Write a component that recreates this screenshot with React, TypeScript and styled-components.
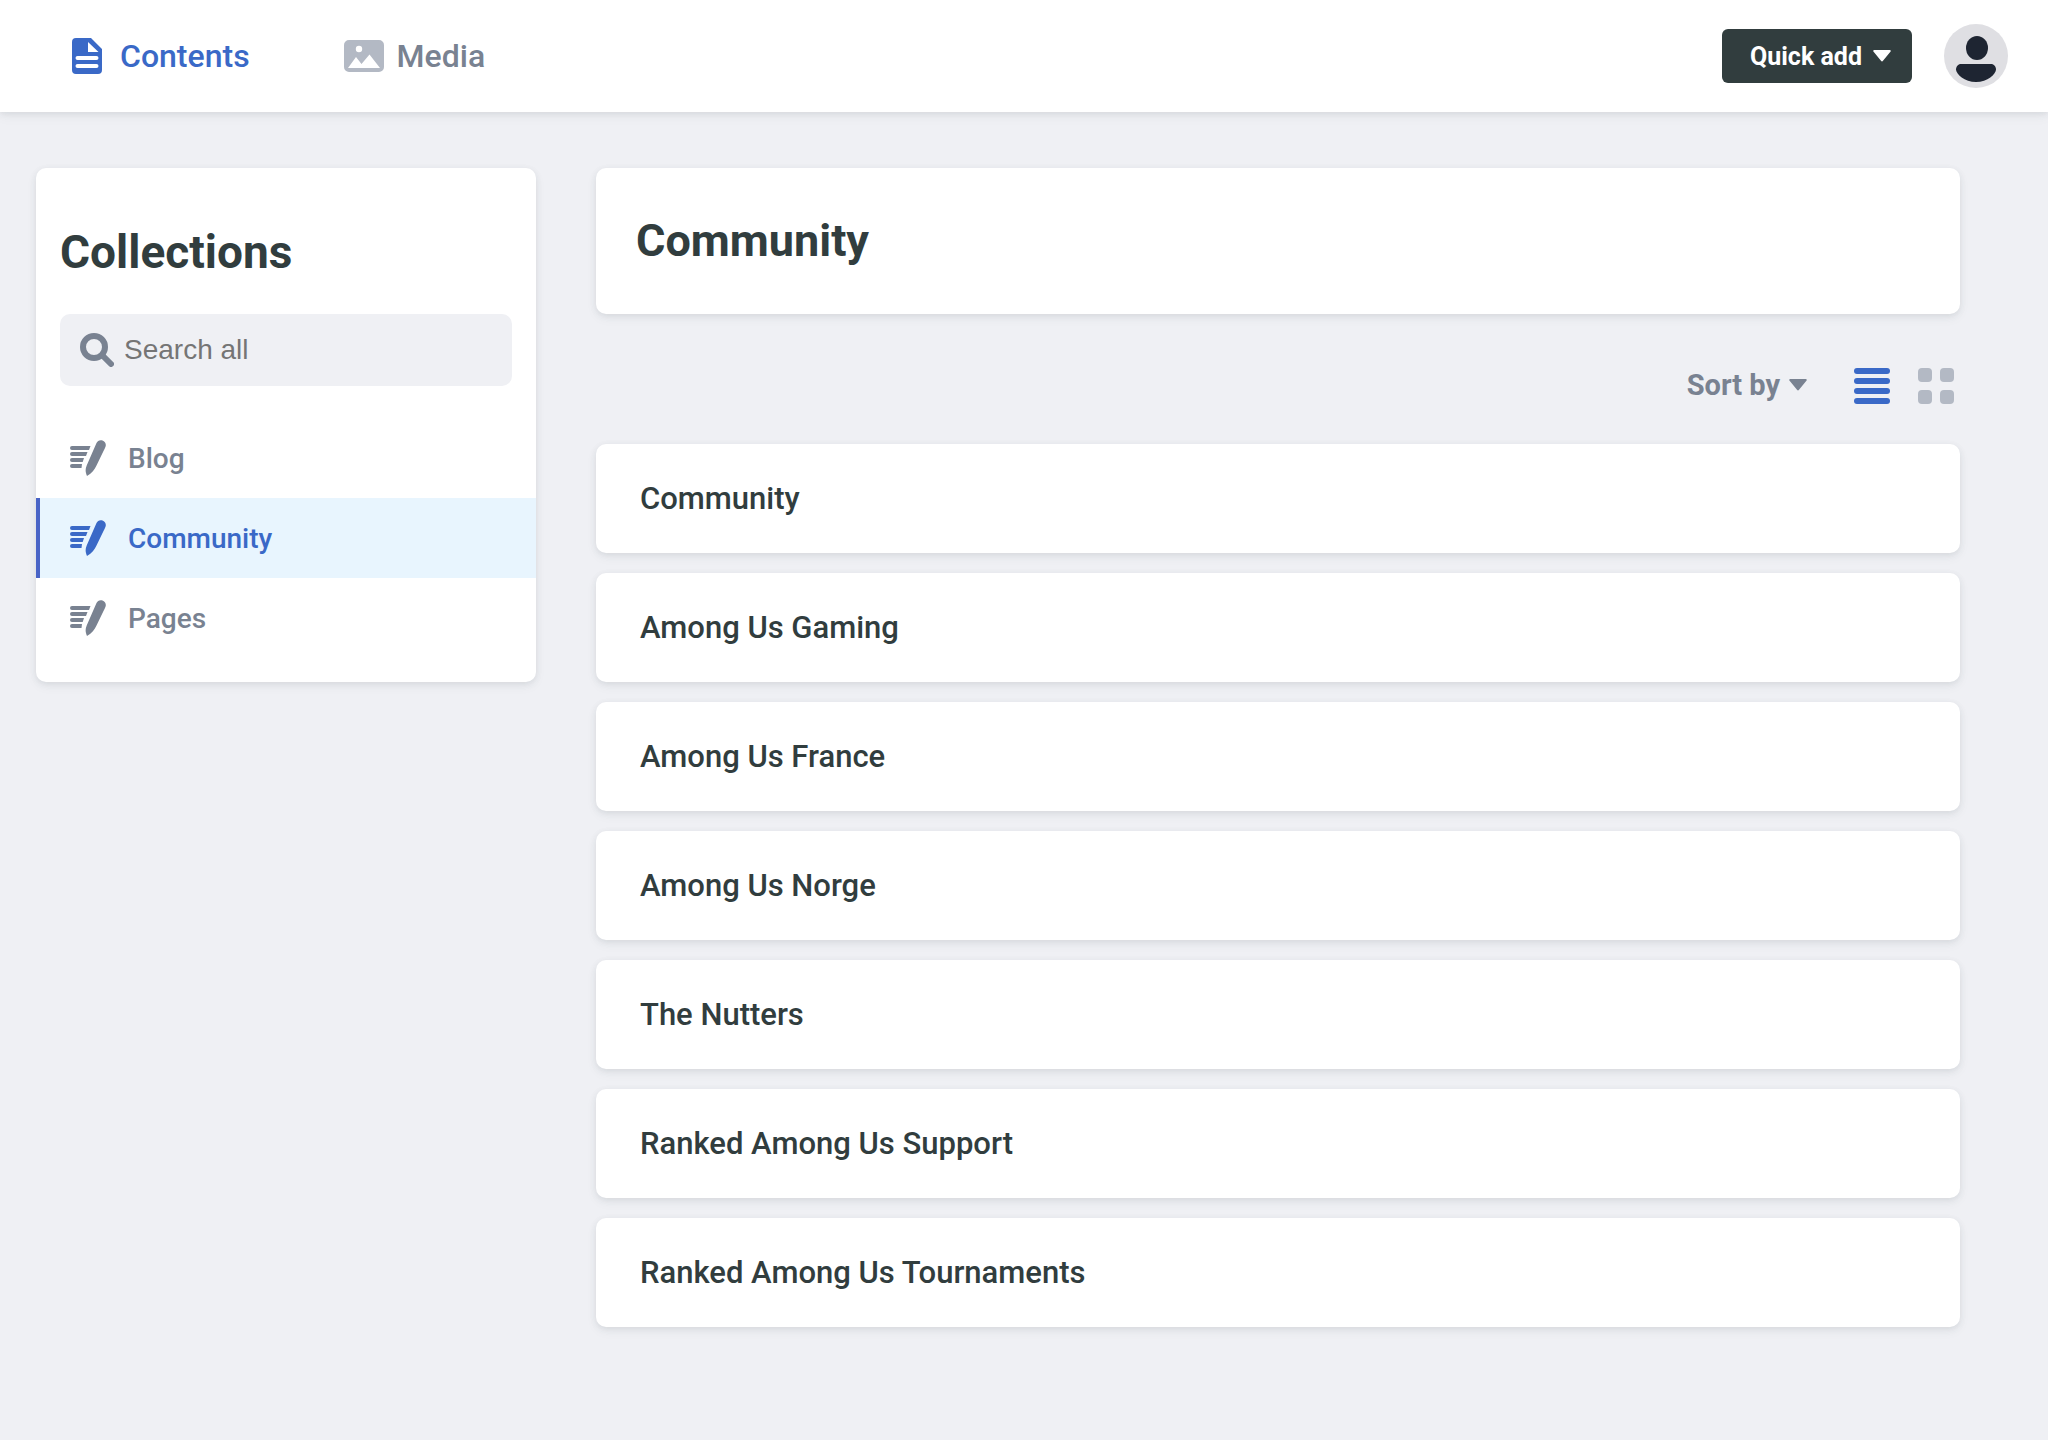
import React from 'react';
import styled, { createGlobalStyle, css } from 'styled-components';

const colors = {
  background: '#eff0f4',
  surface: '#ffffff',
  heading: '#313d3e',
  text: '#798291',
  muted: '#b3b9c4',
  active: '#3a69c7',
  activeBackground: '#e8f5fe',
  activeBorder: '#4863c6',
  placeholder: '#757575',
  avatar: '#dfdfe3',
  avatarInk: '#1e2532',
};

const sans = "Roboto, 'Liberation Sans', sans-serif";

const GlobalStyle = createGlobalStyle`
  *, *::before, *::after { box-sizing: border-box; }
  body {
    margin: 0;
    background: ${colors.background};
    color: ${colors.text};
    font-family: ${sans};
  }
  h1, h2, ul { margin: 0; padding: 0; }
  ul { list-style: none; }
  svg { display: block; flex: none; fill: currentColor; }
`;

const surface = css`
  background: ${colors.surface};
  border-radius: 10px;
  box-shadow: 0 4px 12px rgba(68, 74, 87, 0.05), 0 2px 6px rgba(68, 74, 87, 0.1);
`;

const plainButton = css`
  display: flex;
  align-items: center;
  padding: 0;
  border: 0;
  background: none;
  font-family: ${sans};
  cursor: pointer;
`;

const Header = styled.header`
  display: flex;
  align-items: center;
  justify-content: space-between;
  height: 112px;
  padding: 0 40px 0 65px;
  background: ${colors.surface};
  box-shadow: 0 4px 12px rgba(68, 74, 87, 0.05), 0 2px 6px rgba(68, 74, 87, 0.1);
`;

const Nav = styled.nav`
  display: flex;
  gap: 92px;
`;

const NavLink = styled.a<{ $active?: boolean }>`
  display: flex;
  align-items: center;
  gap: 11px;
  color: ${(p) => (p.$active ? colors.active : colors.text)};
  font-size: 32px;
  font-weight: 500;
  line-height: 40px;
  text-decoration: none;
`;

const NavIcon = styled.span<{ $color: string }>`
  display: flex;
  justify-content: center;
  width: 44px;
  color: ${(p) => p.$color};
`;

const Actions = styled.div`
  display: flex;
  align-items: center;
  gap: 32px;
`;

const QuickAdd = styled.button`
  ${plainButton}
  justify-content: space-between;
  gap: 9px;
  min-width: 190px;
  height: 54px;
  padding: 0 21px 0 28px;
  border-radius: 6px;
  background: ${colors.heading};
  color: ${colors.surface};
  font-size: 25px;
  font-weight: 700;
`;

const AvatarButton = styled.button`
  ${plainButton}
  border-radius: 50%;
`;

const Layout = styled.div`
  display: flex;
  align-items: flex-start;
  gap: 60px;
  padding: 56px 88px 112px 36px;
`;

const Sidebar = styled.aside`
  ${surface}
  flex: none;
  width: 500px;
  padding: 56px 0 24px;
`;

const SidebarTitle = styled.h2`
  padding: 0 24px;
  color: ${colors.heading};
  font-size: 46px;
  font-weight: 700;
  line-height: 56px;
`;

const Search = styled.label`
  display: flex;
  align-items: center;
  gap: 10px;
  height: 72px;
  margin: 34px 24px 32px;
  padding: 0 20px;
  border-radius: 10px;
  background: ${colors.background};
`;

const SearchInput = styled.input`
  flex: 1;
  min-width: 0;
  padding: 0;
  border: 0;
  outline: 0;
  background: none;
  color: ${colors.heading};
  font-family: 'Liberation Sans', Arial, sans-serif;
  font-size: 28px;

  &::placeholder { color: ${colors.placeholder}; opacity: 1; }
`;

const CollectionLink = styled.a<{ $active?: boolean }>`
  display: flex;
  align-items: center;
  gap: 22px;
  height: 80px;
  padding: 0 24px 0 30px;
  border-left: 4px solid ${(p) => (p.$active ? colors.activeBorder : 'transparent')};
  background: ${(p) => (p.$active ? colors.activeBackground : 'transparent')};
  color: ${(p) => (p.$active ? colors.active : colors.text)};
  font-size: 28px;
  font-weight: 500;
  text-decoration: none;
`;

const Main = styled.main`
  flex: 1;
  min-width: 0;
`;

const TitleCard = styled.section`
  ${surface}
  padding: 45px 40px;
`;

const Title = styled.h1`
  color: ${colors.heading};
  font-size: 45px;
  font-weight: 700;
  line-height: 56px;
`;

const Controls = styled.div`
  display: flex;
  align-items: flex-start;
  justify-content: flex-end;
  gap: 28px;
  padding: 54px 6px 40px;
`;

const SortButton = styled.button`
  ${plainButton}
  gap: 9px;
  height: 34px;
  margin-right: 19px;
  color: ${colors.text};
  font-size: 29px;
  font-weight: 700;
  line-height: 34px;
`;

const ViewButton = styled.button<{ $active?: boolean }>`
  ${plainButton}
  color: ${(p) => (p.$active ? colors.active : colors.muted)};
`;

const Entries = styled.ul`
  display: grid;
  gap: 20px;
`;

const EntryLink = styled.a`
  ${surface}
  display: flex;
  align-items: center;
  height: 109px;
  padding: 0 44px;
  color: ${colors.heading};
  font-size: 31px;
  font-weight: 500;
  text-decoration: none;
`;

const PageIcon = () => (
  <svg width="30" height="36" viewBox="0 0 30 36" aria-hidden="true">
    <path
      fillRule="evenodd"
      d="M4 0h15l11 11v21a4 4 0 0 1-4 4H4a4 4 0 0 1-4-4V4a4 4 0 0 1 4-4zM16 4v10h10.500zM5.500 18a2 2 0 0 0 0 4h19a2 2 0 0 0 0-4zM5.500 26a2 2 0 0 0 0 4h19a2 2 0 0 0 0-4z"
    />
  </svg>
);

const ImageIcon = () => (
  <svg width="40" height="32" viewBox="0 0 40 32" aria-hidden="true">
    <path
      fillRule="evenodd"
      d="M5 0h30a5 5 0 0 1 5 5v22a5 5 0 0 1-5 5H5a5 5 0 0 1-5-5V5a5 5 0 0 1 5-5zM15 5.800a3.200 3.200 0 1 0 0 6.400a3.200 3.200 0 0 0 0-6.400zM4 28h32L25.500 14.500L17.500 24L12 17z"
    />
  </svg>
);

const CaretIcon = () => (
  <svg width="18" height="12" viewBox="0 0 18 12" aria-hidden="true">
    <path d="M1.200 0h15.600a1 1 0 0 1 .8 1.600L10 10.800a1.300 1.300 0 0 1-2 0L.4 1.600A1 1 0 0 1 1.200 0z" />
  </svg>
);

const AvatarIcon = () => (
  <svg width="64" height="64" viewBox="0 0 64 64" aria-hidden="true">
    <circle cx="32" cy="32" r="32" fill={colors.avatar} />
    <g fill={colors.avatarInk}>
      <ellipse cx="33" cy="24" rx="11" ry="12" />
      <path d="M17 40h30c3 0 5 2.500 5 5.500C52 50 43.500 58 32 58S12 50 12 45.500C12 42.500 14 40 17 40z" />
    </g>
  </svg>
);

const SearchIcon = () => (
  <svg width="34" height="34" viewBox="0 0 34 34" aria-hidden="true">
    <g fill="none" stroke={colors.text}>
      <circle cx="14" cy="14" r="11" strokeWidth="6" />
      <path d="M22.500 22.500L31 31" strokeWidth="6" strokeLinecap="round" />
    </g>
  </svg>
);

const WriteIcon = () => (
  <svg width="36" height="36" viewBox="0 0 36 36" aria-hidden="true">
    <path d="M2 6h18.500l-1.500 4H2a2 2 0 0 1 0-4zM2 12h15.500L16 16H2a2 2 0 0 1 0-4zM2 18h12L12.700 22H2a2 2 0 0 1 0-4zM2 24h10l-.5 4H2a2 2 0 0 1 0-4z" />
    <path d="M26.500 3c1-2.300 3.500-3.500 6-2.500s4 3.500 3 6.200c-.6 1.600-1.300 2.700-2 4.300L26.500 25.500c-2 4.200-4.500 7.500-9.500 10.500-1.500-3.500-2-6.500-.3-10.500z" />
  </svg>
);

const ListIcon = () => (
  <svg width="36" height="36" viewBox="0 0 36 36" aria-hidden="true">
    {[0, 10, 20, 30].map((y) => (
      <rect key={y} y={y} width="36" height="6" rx="3" />
    ))}
  </svg>
);

const GridIcon = () => (
  <svg width="36" height="36" viewBox="0 0 36 36" aria-hidden="true">
    <rect width="14" height="14" rx="4" />
    <rect x="22" width="14" height="14" rx="4" />
    <rect y="22" width="14" height="14" rx="4" />
    <rect x="22" y="22" width="14" height="14" rx="4" />
  </svg>
);

const collections = ['Blog', 'Community', 'Pages'];

const entries = [
  'Community',
  'Among Us Gaming',
  'Among Us France',
  'Among Us Norge',
  'The Nutters',
  'Ranked Among Us Support',
  'Ranked Among Us Tournaments',
];

export default function App() {
  const current = 'Community';

  return (
    <>
      <GlobalStyle />
      <Header>
        <Nav>
          <NavLink href="#contents" $active aria-current="page">
            <NavIcon $color={colors.active}><PageIcon /></NavIcon>
            Contents
          </NavLink>
          <NavLink href="#media">
            <NavIcon $color={colors.muted}><ImageIcon /></NavIcon>
            Media
          </NavLink>
        </Nav>
        <Actions>
          <QuickAdd type="button" aria-haspopup="menu">
            Quick add
            <CaretIcon />
          </QuickAdd>
          <AvatarButton type="button" aria-label="Account">
            <AvatarIcon />
          </AvatarButton>
        </Actions>
      </Header>
      <Layout>
        <Sidebar>
          <SidebarTitle>Collections</SidebarTitle>
          <Search>
            <SearchIcon />
            <SearchInput type="text" placeholder="Search all" aria-label="Search all" />
          </Search>
          <ul>
            {collections.map((name) => (
              <li key={name}>
                <CollectionLink href={`#${name.toLowerCase()}`} $active={name === current}>
                  <WriteIcon />
                  {name}
                </CollectionLink>
              </li>
            ))}
          </ul>
        </Sidebar>
        <Main>
          <TitleCard>
            <Title>{current}</Title>
          </TitleCard>
          <Controls>
            <SortButton type="button" aria-haspopup="menu">
              Sort by
              <CaretIcon />
            </SortButton>
            <ViewButton type="button" $active aria-label="List view"><ListIcon /></ViewButton>
            <ViewButton type="button" aria-label="Grid view"><GridIcon /></ViewButton>
          </Controls>
          <Entries>
            {entries.map((title) => (
              <li key={title}>
                <EntryLink href="#entry">{title}</EntryLink>
              </li>
            ))}
          </Entries>
        </Main>
      </Layout>
    </>
  );
}
